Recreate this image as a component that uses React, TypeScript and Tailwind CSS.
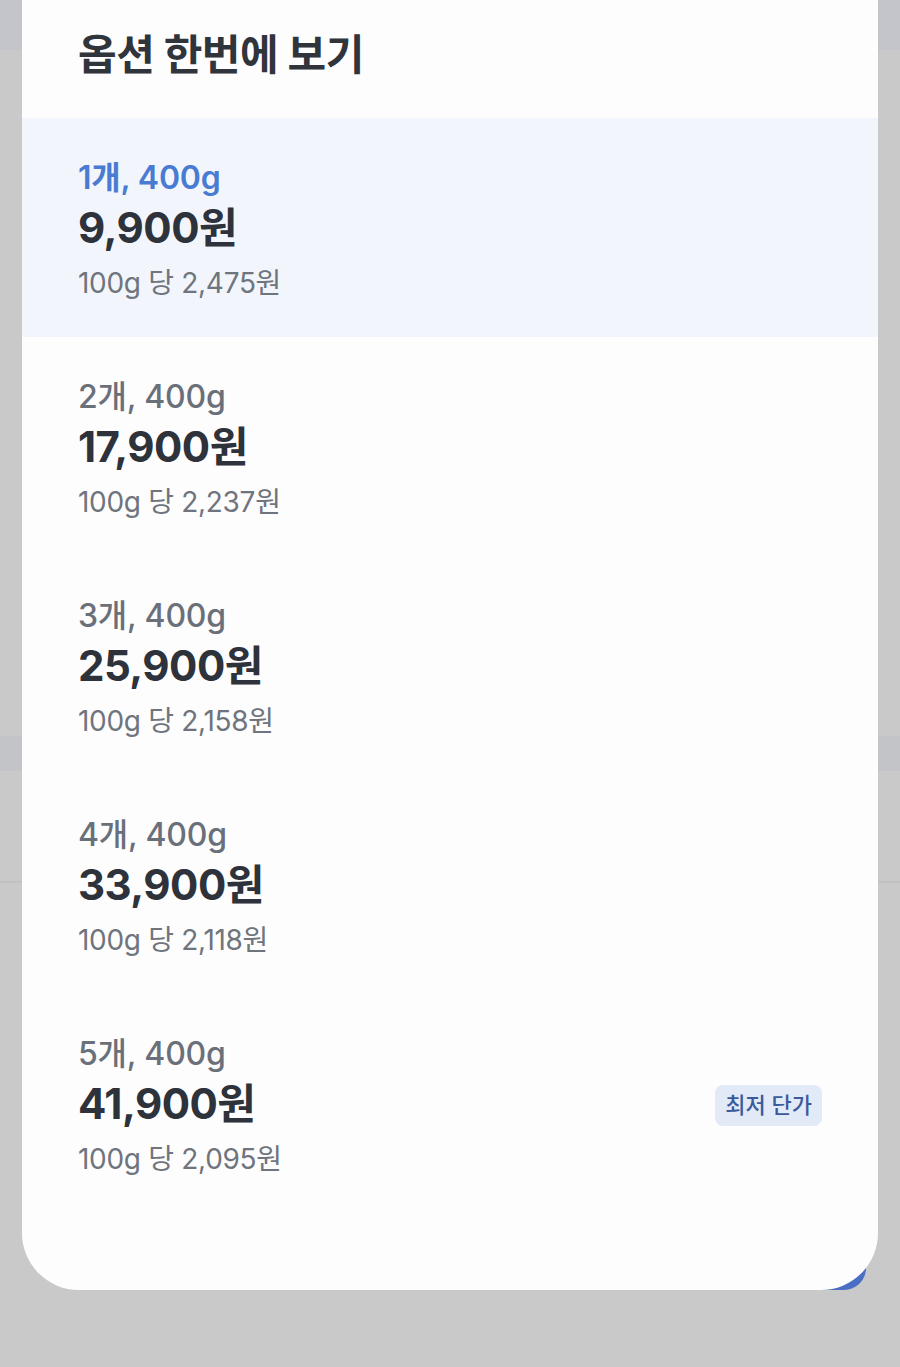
const FONT = { fontFamily: '"Inter", "Noto Sans CJK KR", sans-serif' };

type Option = {
  label: string;
  price: string;
  per: string;
  best?: boolean;
};

const options: Option[] = [
  { label: "1개, 400g", price: "9,900원", per: "100g 당 2,475원" },
  { label: "2개, 400g", price: "17,900원", per: "100g 당 2,237원" },
  { label: "3개, 400g", price: "25,900원", per: "100g 당 2,158원" },
  { label: "4개, 400g", price: "33,900원", per: "100g 당 2,118원" },
  { label: "5개, 400g", price: "41,900원", per: "100g 당 2,095원", best: true },
];

function OptionRow({ item, selected }: { item: Option; selected: boolean }) {
  return (
    <div
      className={`flex h-[219px] items-center justify-between px-[56px] pt-[10px] ${
        selected ? "bg-[#f2f6fc]" : ""
      }`}
    >
      <div className="flex flex-col">
        <div
          className={`text-[32px] leading-[40px] tracking-[-0.2px] ${
            selected ? "font-semibold text-[#4a7bd3]" : "font-medium text-[#6a7079]"
          }`}
        >
          {item.label}
        </div>
        <div className="text-[42px] font-bold leading-[60px] tracking-[-0.5px] text-[#2e323a]">
          {item.price}
        </div>
        <div className="text-[28px] leading-[50px] tracking-[-0.3px] text-[#6f747d]">
          {item.per}
        </div>
      </div>
      {item.best && (
        <span className="mb-[6px] flex h-[41px] items-center rounded-[8px] bg-[#e2eaf7] px-[10px] text-[22px] font-medium text-[#3a5a9c]">
          최저 단가
        </span>
      )}
    </div>
  );
}

export default function App() {
  return (
    <div className="relative h-[1367px] w-[900px] overflow-hidden bg-[#c9c9c9]" style={FONT}>
      {/* dimmed page behind the sheet */}
      <div className="h-[50px] bg-[#c4c5ca]" />
      <div className="h-[686px]" />
      <div className="h-[35px] bg-[#c3c4c8]" />
      <div className="h-[110px]" />
      <div className="h-[2px] bg-[#c1c1c1]" />

      {/* purchase button of the page underneath, only its corner peeks out */}
      <div className="absolute left-[460px] right-[34px] top-[1210px] h-[80px] rounded-[22px] bg-[#4a6ec4]" />

      {/* bottom sheet */}
      <div className="absolute left-[22px] right-[22px] top-0 flex h-[1290px] flex-col rounded-b-[57px] bg-[#fdfdfe]">
        <div className="flex h-[118px] items-start px-[56px] pt-[29px]">
          <h1 className="text-[42px] font-bold leading-[52px] tracking-[-0.5px] text-[#30343b]">
            옵션 한번에 보기
          </h1>
        </div>
        {options.map((o, i) => (
          <OptionRow key={o.label} item={o} selected={i === 0} />
        ))}
      </div>
    </div>
  );
}
